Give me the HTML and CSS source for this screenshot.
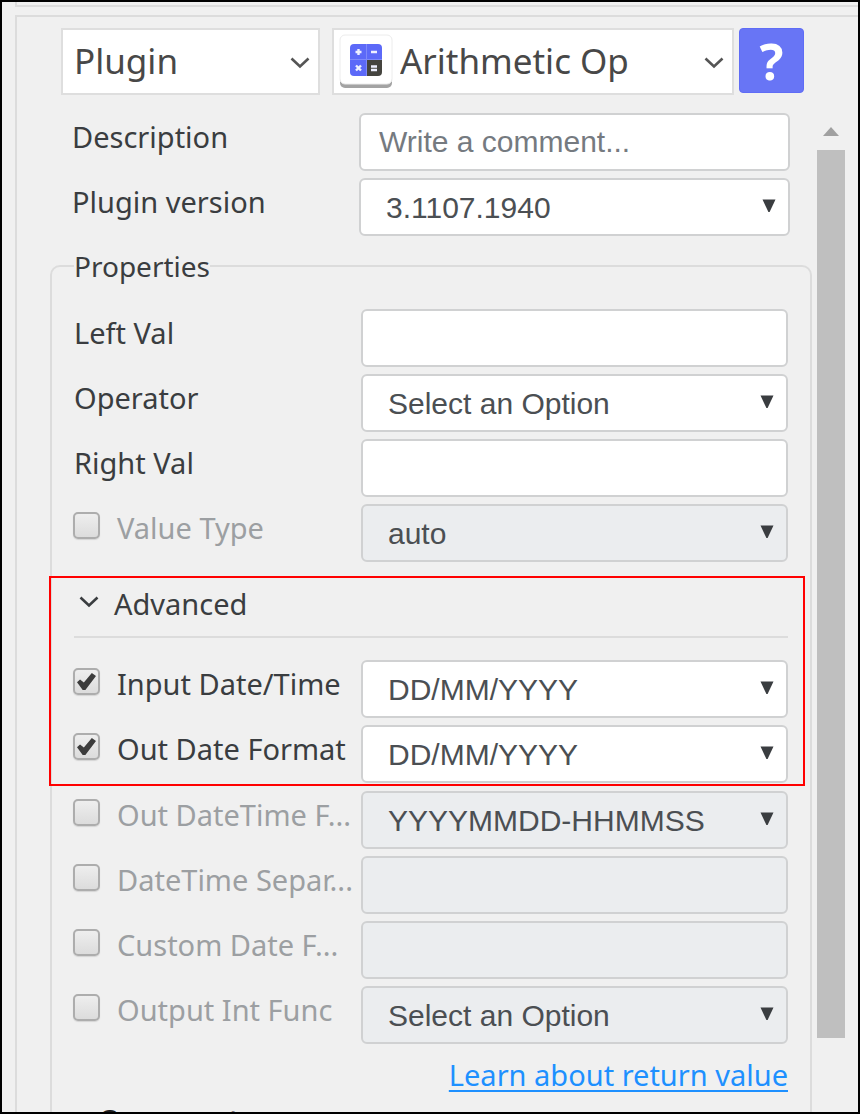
FILE: index.html
```
<!DOCTYPE html>
<html lang="en">
<head>
<meta charset="utf-8">
<title>Arithmetic Op</title>
<link rel="stylesheet" href="styles.css">
</head>
<body>
<svg class="defs" aria-hidden="true">
  <symbol id="chevron" viewBox="0 0 20 12"><path d="M1.5 1.5 L10 9.5 L18.5 1.5" fill="none" stroke="currentColor" stroke-width="2.6"/></symbol>
  <symbol id="triangle" viewBox="0 0 14 14"><path d="M0.5 0.5 H13.5 L7.6 13 H6.4 Z" fill="currentColor"/></symbol>
</svg>
<main class="frame">
  <div class="strip"></div>
  <form class="panel">
    <header class="head">
      <div class="pick pick-type">
        <select class="pick-select" aria-label="Action type"><option>Plugin</option></select>
        <svg class="pick-arrow"><use href="#chevron"/></svg>
      </div>
      <div class="pick pick-plugin">
        <svg class="tile" viewBox="0 0 54 56" aria-hidden="true">
          <rect x="1" y="5" width="52" height="49" rx="5" fill="#a3a3a3"/>
          <rect x="1" y="1" width="52" height="49" rx="5" fill="#fff" stroke="#ececec"/>
          <path d="M15 10h12v15H11V14q0-4 4-4z" fill="#5c69f8"/>
          <path d="M27 10h12q4 0 4 4v11H27z" fill="#5c69f8"/>
          <path d="M11 25h16v17H15q-4 0-4-4z" fill="#5c69f8"/>
          <path d="M28 26h15v12q0 4-4 4H28z" fill="#45443f"/>
          <path d="M27.500 10v32M11 25.500H43" stroke="#7e89fa" stroke-width="1" fill="none"/>
          <path d="M16.500 18h6M19.500 15v6M32 18h6M17 31.500l5 5M22 31.500l-5 5M32 32.500h6M32 36h6" stroke="#eef0ff" stroke-width="2.400" fill="none"/>
        </svg>
        <select class="pick-select" aria-label="Plugin"><option>Arithmetic Op</option></select>
        <svg class="pick-arrow"><use href="#chevron"/></svg>
      </div>
      <button type="button" class="help" aria-label="Help">?</button>
    </header>

    <div class="body">
      <div class="content">
        <div class="rows general">
          <div class="row">
            <label class="label" for="desc">Description</label>
            <input class="box" id="desc" type="text" placeholder="Write a comment...">
          </div>
          <div class="row">
            <label class="label" for="ver">Plugin version</label>
            <div class="drop"><select class="box" id="ver"><option>3.1107.1940</option></select><svg class="drop-arrow"><use href="#triangle"/></svg></div>
          </div>
        </div>

        <fieldset class="props">
          <legend class="legend">Properties</legend>
          <div class="rows">
            <div class="row">
              <label class="label" for="left">Left Val</label>
              <input class="box" id="left" type="text">
            </div>
            <div class="row">
              <label class="label" for="op">Operator</label>
              <div class="drop"><select class="box" id="op"><option>Select an Option</option></select><svg class="drop-arrow"><use href="#triangle"/></svg></div>
            </div>
            <div class="row">
              <label class="label" for="right">Right Val</label>
              <input class="box" id="right" type="text">
            </div>
            <div class="row off">
              <label class="label"><input class="check" type="checkbox">Value Type</label>
              <div class="drop"><select class="box" aria-label="Value Type" disabled><option>auto</option></select><svg class="drop-arrow"><use href="#triangle"/></svg></div>
            </div>
          </div>

          <section class="advanced">
            <button type="button" class="toggle" aria-expanded="true"><svg class="toggle-arrow"><use href="#chevron"/></svg>Advanced</button>
            <div class="rows">
              <div class="row">
                <label class="label"><input class="check" type="checkbox" checked>Input Date/Time</label>
                <div class="drop"><select class="box" aria-label="Input Date/Time"><option>DD/MM/YYYY</option></select><svg class="drop-arrow"><use href="#triangle"/></svg></div>
              </div>
              <div class="row">
                <label class="label"><input class="check" type="checkbox" checked>Out Date Format</label>
                <div class="drop"><select class="box" aria-label="Out Date Format"><option>DD/MM/YYYY</option></select><svg class="drop-arrow"><use href="#triangle"/></svg></div>
              </div>
            </div>
            <div class="highlight"></div>
          </section>

          <div class="rows more">
            <div class="row off">
              <label class="label"><input class="check" type="checkbox">Out DateTime F...</label>
              <div class="drop"><select class="box" aria-label="Out DateTime Format" disabled><option>YYYYMMDD-HHMMSS</option></select><svg class="drop-arrow"><use href="#triangle"/></svg></div>
            </div>
            <div class="row off">
              <label class="label"><input class="check" type="checkbox">DateTime Separ...</label>
              <input class="box" type="text" aria-label="DateTime Separator" disabled>
            </div>
            <div class="row off">
              <label class="label"><input class="check" type="checkbox">Custom Date F...</label>
              <input class="box" type="text" aria-label="Custom Date Format" disabled>
            </div>
            <div class="row off">
              <label class="label"><input class="check" type="checkbox">Output Int Func</label>
              <div class="drop"><select class="box" aria-label="Output Int Func" disabled><option>Select an Option</option></select><svg class="drop-arrow"><use href="#triangle"/></svg></div>
            </div>
          </div>

          <a class="learn" href="#">Learn about return value</a>
          <h2 class="next">Comment</h2>
        </fieldset>
      </div>

      <div class="scroll">
        <svg class="scroll-up" viewBox="0 0 16 9"><path d="M8 0 L16 9 H0 Z" fill="#a0a0a0"/></svg>
        <div class="thumb"></div>
      </div>
    </div>
  </form>
</main>
</body>
</html>
```
FILE: styles.css
```
* { box-sizing: border-box; }

body {
  margin: 0;
  background: #f0f0f0;
  color: #3a3d40;
  font: 29px/48px "Noto Sans", "Open Sans", sans-serif;
}

.defs { display: none; }

.frame {
  display: flex;
  flex-direction: column;
  height: 100vh;
  padding-left: 13px;
  border: 2px solid #000;
  overflow: hidden;
}

.strip {
  flex: none;
  height: 5px;
  border: solid #dcdcdc;
  border-width: 0 0 2px 2px;
}

.panel {
  flex: 1;
  min-height: 0;
  display: flex;
  flex-direction: column;
  margin-top: 8px;
  border: solid #dcdcdc;
  border-width: 2px 0 0 2px;
}

.head {
  flex: none;
  display: flex;
  align-items: flex-start;
  padding: 11px 54px 0 44px;
}

.pick {
  position: relative;
  display: flex;
  align-items: center;
  height: 67px;
  background: #fff;
  border: 2px solid #dedede;
}

.pick-type { flex: 260; margin-right: 12px; }
.pick-plugin { flex: 401; margin-right: 5px; padding-left: 5px; }

.pick-select {
  flex: 1;
  min-width: 0;
  height: 63px;
  padding: 0 40px 2px 7px;
  border: 0;
  background: transparent;
  appearance: none;
  color: #484848;
  font: 35px "Noto Sans", "Open Sans", sans-serif;
}

.pick-type .pick-select { padding-left: 11px; }

.pick-arrow {
  position: absolute;
  right: 8px;
  top: 27px;
  width: 20px;
  height: 12px;
  color: #555;
  pointer-events: none;
}

.tile { flex: none; width: 54px; height: 56px; }

.help {
  flex: none;
  width: 65px;
  height: 65px;
  padding: 0;
  border: 1px solid #5f6cf6;
  border-radius: 4px;
  background: #6875f5;
  color: #fff;
  font: 700 50px "Noto Sans", "Open Sans", sans-serif;
  line-height: 50px;
}

.body {
  flex: 1;
  min-height: 0;
  display: flex;
  margin-top: 18px;
}

.content {
  flex: 1;
  min-width: 0;
  padding-left: 33px;
}

.rows { display: grid; gap: 7px; }

.general { padding: 0 22px 0 22px; }

.row {
  display: grid;
  grid-template-columns: 287px 1fr;
  align-items: start;
}

.label {
  display: flex;
  align-items: flex-start;
  height: 48px;
  white-space: nowrap;
}

.off .label { color: #9c9fa2; }

.check {
  flex: none;
  display: grid;
  place-items: center;
  width: 27px;
  height: 27px;
  margin: 8px 17px 0 -1px;
  appearance: none;
  border: 2px solid #adadad;
  border-radius: 5px;
  background: linear-gradient(#eeeeee, #dcdcdc);
  box-shadow: 0 1px 1px #d4d4d4;
}

.check:checked::before {
  content: "";
  width: 19px;
  height: 17px;
  background: #3c3c3c;
  clip-path: polygon(0 54%, 16% 38%, 36% 56%, 78% 0, 100% 18%, 44% 100%, 30% 100%);
}

.drop { position: relative; display: flex; }

.box {
  width: 100%;
  min-width: 0;
  height: 58px;
  padding: 0 18px;
  border: 2px solid #d0d1d2;
  border-radius: 6px;
  background: #fff;
  appearance: none;
  color: #4b4f53;
  font: 30px "Liberation Sans", Arial, sans-serif;
}

select.box { padding: 0 48px 0 25px; opacity: 1; }
.box:disabled { background: #ebedef; }
.box::placeholder { color: #757a80; opacity: 1; }

.drop-arrow {
  position: absolute;
  right: 14px;
  top: 21px;
  width: 14px;
  height: 14px;
  color: #3a3d40;
  pointer-events: none;
}

.props {
  min-width: 0;
  margin: 10px 0 0;
  padding: 23px 22px 0;
  border: 2px solid #dcdcdc;
  border-radius: 10px;
}

.legend { padding: 0; font-size: 28px; line-height: 40px; }

.advanced { position: relative; margin-top: 15px; }

.toggle {
  display: flex;
  align-items: center;
  width: 100%;
  height: 61px;
  margin-bottom: 22px;
  padding: 0 0 6px 5px;
  border: 0;
  border-bottom: 2px solid #dcdcdc;
  background: none;
  color: inherit;
  font: inherit;
  text-align: left;
}

.toggle-arrow { width: 20px; height: 12px; margin: 0 15px 4px 0; }

.highlight {
  position: absolute;
  inset: -1px -17px -3px -25px;
  border: 2px solid #f00;
  pointer-events: none;
}

.more { margin-top: 8px; }

.learn {
  display: block;
  width: fit-content;
  margin: 7px 0 0 auto;
  color: #1e90ff;
  text-decoration-thickness: 2px;
  text-underline-offset: 4px;
}

.next {
  margin: 0 0 0 24px;
  color: #1c1c1c;
  font-size: 29px;
  line-height: 42px;
}

.scroll {
  flex: none;
  display: flex;
  flex-direction: column;
  align-items: center;
  width: 28px;
  margin: 0 13px 0 5px;
  padding-bottom: 74px;
}

.scroll-up { flex: none; width: 16px; height: 9px; margin: 14px 0; }

.thumb { flex: 1; width: 28px; background: #bfbfbf; }
```
